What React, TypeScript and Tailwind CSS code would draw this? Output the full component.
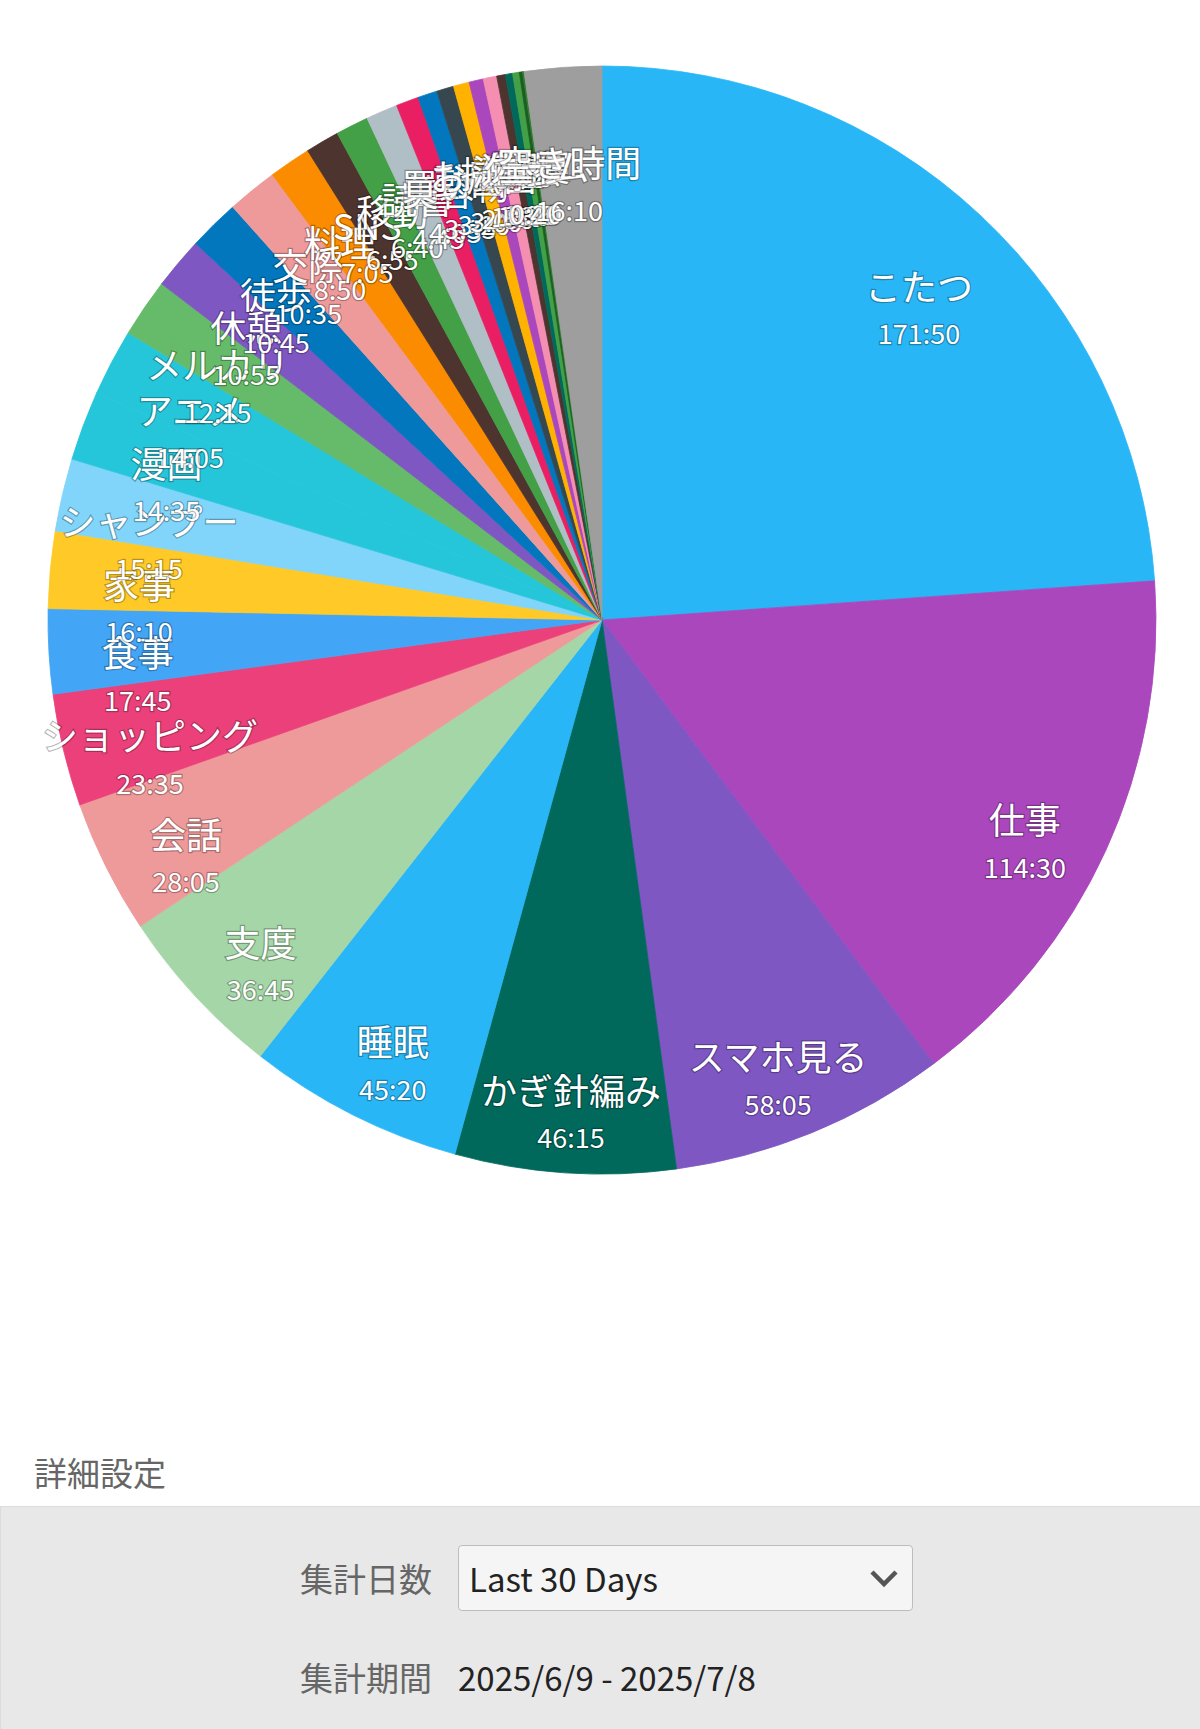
import React from "react";

type Slice = { name: string; time: string; color: string };

const slices: Slice[] = [
    { name: "こたつ", time: "171:50", color: "#29B6F6" },
    { name: "仕事", time: "114:30", color: "#AB47BC" },
    { name: "スマホ見る", time: "58:05", color: "#7E57C2" },
    { name: "かぎ針編み", time: "46:15", color: "#00695C" },
    { name: "睡眠", time: "45:20", color: "#29B6F6" },
    { name: "支度", time: "36:45", color: "#A5D6A7" },
    { name: "会話", time: "28:05", color: "#EF9A9A" },
    { name: "ショッピング", time: "23:35", color: "#EC407A" },
    { name: "食事", time: "17:45", color: "#42A5F5" },
    { name: "家事", time: "16:10", color: "#FFCA28" },
    { name: "シャンプー", time: "15:15", color: "#81D4FA" },
    { name: "漫画", time: "14:35", color: "#26C6DA" },
    { name: "アニメ", time: "14:05", color: "#26C6DA" },
    { name: "メルカリ", time: "12:15", color: "#66BB6A" },
    { name: "休憩", time: "10:55", color: "#7E57C2" },
    { name: "徒歩", time: "10:45", color: "#0277BD" },
    { name: "交際", time: "10:35", color: "#EF9A9A" },
    { name: "料理", time: "8:50", color: "#FB8C00" },
    { name: "SNS", time: "7:05", color: "#4E342E" },
    { name: "移動", time: "6:55", color: "#43A047" },
    { name: "読書", time: "6:40", color: "#B0BEC5" },
    { name: "美容", time: "4:45", color: "#E91E63" },
    { name: "買い物", time: "4:05", color: "#0277BD" },
    { name: "動画", time: "3:35", color: "#37474F" },
    { name: "お風呂", time: "3:20", color: "#FFB300" },
    { name: "掃除", time: "3:00", color: "#AB47BC" },
    { name: "洗濯", time: "2:50", color: "#F48FB1" },
    { name: "運動", time: "1:50", color: "#4E342E" },
    { name: "勉強", time: "1:30", color: "#00695C" },
    { name: "散歩", time: "1:25", color: "#43A047" },
    { name: "昼寝", time: "0:40", color: "#1B5E20" },
    { name: "ゲーム", time: "0:20", color: "#2E7D32" },
    { name: "空き時間", time: "16:10", color: "#9E9E9E" },
];

const CX = 602;
const CY = 620;
const R = 554;
const LABEL_R = 465;

function toMinutes(t: string): number {
    const [h, m] = t.split(":").map(Number);
    return h * 60 + m;
}

function point(deg: number, r: number): [number, number] {
    const rad = (deg * Math.PI) / 180;
    return [CX + r * Math.sin(rad), CY - r * Math.cos(rad)];
}

function PieChart() {
    const total = slices.reduce((s, x) => s + toMinutes(x.time), 0);
    let start = 0;
    const arcs = slices.map((s) => {
        const sweep = (toMinutes(s.time) / total) * 360;
        const a0 = start;
        const a1 = start + sweep;
        start = a1;
        const [x0, y0] = point(a0, R);
        const [x1, y1] = point(a1, R);
        const large = sweep > 180 ? 1 : 0;
        const d = `M ${CX} ${CY} L ${x0} ${y0} A ${R} ${R} 0 ${large} 1 ${x1} ${y1} Z`;
        const [lx, ly] = point((a0 + a1) / 2, LABEL_R);
        return { ...s, d, lx, ly };
    });

    const textStyle = {
        fill: "#ffffff",
        stroke: "rgba(0,0,0,0.28)",
        strokeWidth: 2.5,
        paintOrder: "stroke" as const,
        fontFamily: '"Noto Sans CJK JP", "Noto Sans", sans-serif',
    };

    return (
        <svg width="1200" height="1240" viewBox="0 0 1200 1240" className="block">
            {/* slices, stroked in their own colour to hide seams */}
            {arcs.map((a, i) => (
                <path key={i} d={a.d} fill={a.color} stroke={a.color} strokeWidth="0.8" strokeLinejoin="round" />
            ))}
            {arcs.map((a, i) => (
                <g key={"l" + i} style={textStyle}>
                    <text x={a.lx} y={a.ly + 5} fontSize="36" textAnchor="middle" dominantBaseline="central">
                        {a.name}
                    </text>
                    <text x={a.lx} y={a.ly + 53} fontSize="27" textAnchor="middle" dominantBaseline="central">
                        {a.time}
                    </text>
                </g>
            ))}
        </svg>
    );
}

export default function App() {
    return (
        <div className="w-[1200px] bg-white font-['Noto_Sans_CJK_JP','Noto_Sans',sans-serif]">
            {/* Chart */}
            <PieChart />

            <div className="h-[208px]" />

            {/* 詳細設定 */}
            <div className="h-[58px] pl-[34px] text-[33px] leading-[48px] text-[#666666]">詳細設定</div>

            {/* Settings panel */}
            <div className="h-[223px] border-t border-l border-[#dcdcdc] bg-[#e8e8e8] pt-[38px]">
                <div className="grid grid-cols-[431px_auto] gap-x-[26px] gap-y-[42px] items-center">
                    <div className="text-right text-[33px] leading-[48px] text-[#666666]">集計日数</div>
                    <div className="flex h-[66px] w-[455px] items-center justify-between rounded-[4px] border border-[#bdbdbd] bg-[#f5f5f5] pl-[10px] pr-[13px]">
                        <span className="text-[33px] leading-[48px] text-[#222222]">Last 30 Days</span>
                        <svg width="30" height="19" viewBox="0 0 30 19">
                            <polyline points="3,3 15,15 27,3" fill="none" stroke="#555555" strokeWidth="4.5" />
                        </svg>
                    </div>
                    <div className="text-right text-[33px] leading-[48px] text-[#666666]">集計期間</div>
                    <div className="text-[33px] leading-[48px] text-[#222222]">2025/6/9 - 2025/7/8</div>
                </div>
            </div>
        </div>
    );
}
